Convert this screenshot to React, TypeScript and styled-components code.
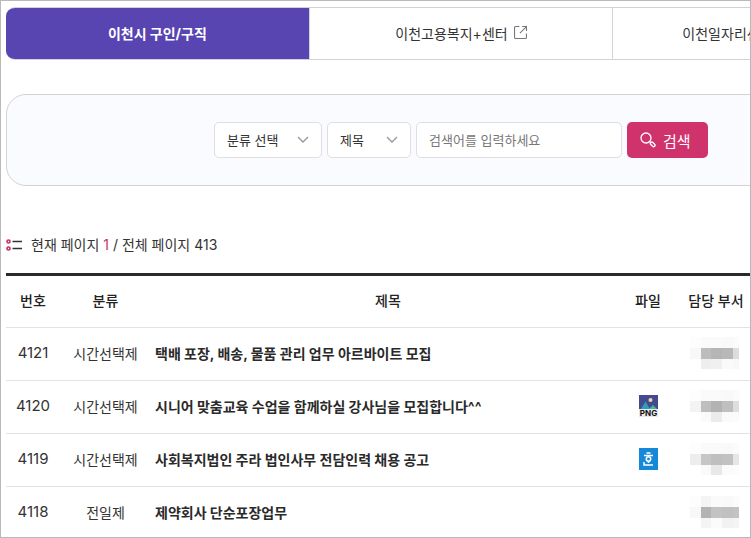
import React from 'react';
import styled, { createGlobalStyle, css } from 'styled-components';

const GlobalStyle = createGlobalStyle`
  *, *::before, *::after { box-sizing: border-box; }
  body { margin: 0; background: #fff; }
  body, button, input, select {
    font-family: Inter, 'Noto Sans CJK KR', sans-serif;
    font-size: 14px;
    color: #333;
  }
`;

const Frame = styled.div`
  height: 100vh;
  overflow: hidden;
  border: 1px solid #b9b9b9;
  padding: 6px 0 0 5px;
`;

const Content = styled.main`
  min-width: 910px;
`;

const Tabs = styled.nav`
  display: flex;
  height: 53px;
  border: solid #d3d3d6;
  border-width: 1px 0;
  border-radius: 9px;
  overflow: hidden;
`;

const Tab = styled.a<{ $active?: boolean }>`
  flex: 1;
  display: flex;
  align-items: center;
  justify-content: center;
  gap: 6px;
  padding-bottom: 2px;
  color: #333;
  text-decoration: none;
  & + & { border-left: 1px solid #d3d3d6; }
  ${p => p.$active && css`
    background: #5845b1;
    color: #fff;
    font-weight: 700;
  `}
`;

const SearchPanel = styled.form`
  display: flex;
  align-items: center;
  justify-content: center;
  gap: 5px;
  height: 92px;
  margin-top: 34px;
  background: #fafbfe;
  border: 1px solid #d3d3d6;
  border-radius: 20px;
`;

const SelectWrap = styled.div<{ $width: number }>`
  display: grid;
  align-items: center;
  width: ${p => p.$width}px;
  > * { grid-area: 1 / 1; }
  > svg { justify-self: end; margin-right: 13px; pointer-events: none; }
`;

const field = css`
  height: 36px;
  padding: 0 12px;
  font-size: 13px;
  background: #fff;
  border: 1px solid #dedee3;
  border-radius: 5px;
`;

const Select = styled.select`
  ${field}
  width: 100%;
  appearance: none;
`;

const SearchInput = styled.input`
  ${field}
  width: 206px;
  &::placeholder { color: #777; opacity: 1; }
`;

const SearchButton = styled.button`
  display: flex;
  align-items: center;
  gap: 7px;
  width: 81px;
  height: 36px;
  padding: 0 13px;
  border: 0;
  border-radius: 5px;
  background: #d0326b;
  color: #fff;
  font-size: 15px;
  white-space: nowrap;
`;

const Summary = styled.p`
  display: flex;
  align-items: center;
  gap: 9px;
  margin: 48px 0 17px;
  line-height: 22px;
  strong { color: #c5336b; font-weight: 400; }
`;

const Table = styled.table`
  width: 100%;
  table-layout: fixed;
  border-collapse: collapse;
  border-top: 3px solid #2a2a2d;
`;

const Col = styled.col<{ $width?: number }>`
  width: ${p => (p.$width ? `${p.$width}px` : 'auto')};
`;

const Row = styled.tr`
  height: 53px;
  border-bottom: 1px solid #e2e2e4;
`;

const Th = styled.th`
  padding: 0 0 3px;
  font-weight: 500;
  color: #222;
`;

const Td = styled.td`
  padding: 0 0 3px;
  text-align: center;
  svg { display: block; margin: 0 auto; }
`;

const NumberCell = styled(Td)`
  font-size: 15px;
`;

const TitleCell = styled(Td)`
  padding-left: 4px;
  text-align: left;
`;

const TitleLink = styled.a`
  color: #2a2a2a;
  font-weight: 700;
  text-decoration: none;
`;

const ExternalIcon = () => (
  <svg width="13" height="13" viewBox="0 0 12 12" fill="none" stroke="#777" aria-hidden="true">
    <path d="M5 .5H1.5a1 1 0 0 0-1 1v9a1 1 0 0 0 1 1h9a1 1 0 0 0 1-1V7M7.5.5h4v4M11.5.5 5.5 6.5" />
  </svg>
);

const Chevron = () => (
  <svg width="12" height="8" viewBox="0 0 12 8" fill="none" stroke="#999" strokeWidth="1.4" aria-hidden="true">
    <path d="m1 1 5 5 5-5" />
  </svg>
);

const SearchIcon = () => (
  <svg width="16" height="16" viewBox="0 0 16 16" fill="none" stroke="#fff" strokeWidth="1.3" aria-hidden="true">
    <circle cx="6" cy="6" r="5" />
    <path d="m9.7 9.7 1 1" />
    <rect x="10" y="11" width="5.4" height="2.8" rx="1.4" transform="rotate(45 12.7 12.4)" />
  </svg>
);

const ListIcon = () => (
  <svg width="16" height="12" viewBox="0 0 16 12" fill="none" aria-hidden="true">
    <g stroke="#c5336b" strokeWidth="1.7">
      <circle cx="2.5" cy="2.5" r="1.5" />
      <circle cx="2.5" cy="9.5" r="1.5" />
    </g>
    <path d="M6.5 2.5H16M6.5 9.5H16" stroke="#333" strokeWidth="1.7" />
  </svg>
);

const PngIcon = () => (
  <svg width="19" height="22" viewBox="0 0 19 22" role="img" aria-label="PNG">
    <path fill="#434a8f" d="M0 0h19v14H0z" />
    <circle cx="11.5" cy="5" r="2" fill="#f5d79a" />
    <path fill="#2ba0b5" d="m2 14 4.500-7.500L11 14z" />
    <path fill="#45b89b" d="m10 14 4-4 4 4z" />
    <path fill="#e9e9ea" d="M0 14h19v8H0z" />
    <text x="9.500" y="21" textAnchor="middle" fontFamily="Inter, sans-serif" fontSize="8" fontWeight="700" fill="#111">PNG</text>
  </svg>
);

const HwpIcon = () => (
  <svg width="19" height="22" viewBox="0 0 19 22" role="img" aria-label="HWP">
    <path fill="#1688d8" d="M0 0h19v22H0z" />
    <g fill="none" stroke="#fff" strokeWidth="1.5">
      <path d="M7.500 5h4M5 7.500h9M9.500 13.500V15M5 14v3h9" />
      <circle cx="9.500" cy="11" r="2.200" />
    </g>
  </svg>
);

const cellEdges = [0, 11, 21, 32, 43, 49];

const Mosaic = ({ shades }: { shades: string[][] }) => (
  <svg width="53" height="32" viewBox="0 0 53 32" shapeRendering="crispEdges" aria-hidden="true">
    {shades.map((line, y) => line.map((c, x) => (
      <rect key={`${x}-${y}`} x={cellEdges[x]} y={y * 11} width={cellEdges[x + 1] - cellEdges[x]} height="11" fill={c} />
    )))}
  </svg>
);

const faint = ['#fdfdfd', '#fafafa', '#fafafa', '#f9f9f9', '#fbfbfb'];

const posts = [
  {
    no: 4121, type: '시간선택제', title: '택배 포장, 배송, 물품 관리 업무 아르바이트 모집',
    shades: [faint, ['#f8f8f8', '#bdbdbd', '#b5b5b5', '#b8b8b8', '#dcdcdc'], ['#fff', '#eee', '#f0f0f0', '#fafafa', '#f8f8f8']],
  },
  {
    no: 4120, type: '시간선택제', title: '시니어 맞춤교육 수업을 함께하실 강사님을 모집합니다^^', file: <PngIcon />,
    shades: [faint, ['#f3f3f3', '#bebebe', '#b2b2b2', '#bfbfbf', '#dedede'], ['#fff', '#fafafa', '#ebebeb', '#fafafa', '#fbfbfb']],
  },
  {
    no: 4119, type: '시간선택제', title: '사회복지법인 주라 법인사무 전담인력 채용 공고', file: <HwpIcon />,
    shades: [faint, ['#ededed', '#c6c6c6', '#bfbfbf', '#c2c2c2', '#e6e6e6'], ['#fff', '#fafafa', '#e8e8e8', '#fbfbfb', '#fcfcfc']],
  },
  {
    no: 4118, type: '전일제', title: '제약회사 단순포장업무',
    shades: [['#fdfdfd', '#f4f4f4', '#fafafa', '#f9f9f9', '#fbfbfb'], ['#f8f8f8', '#b3b3b3', '#c3c3c3', '#c0c0c0', '#c3c3c3'], ['#fff', '#f4f4f4', '#fbfbfb', '#f2f2f2', '#f4f4f4']],
  },
];

export default function App() {
  return (
    <Frame>
      <GlobalStyle />
      <Content>
        <Tabs>
          <Tab href="#jobs" $active>이천시 구인/구직</Tab>
          <Tab href="#center">이천고용복지+센터 <ExternalIcon /></Tab>
          <Tab href="#work">이천일자리센터 홈페이지 <ExternalIcon /></Tab>
        </Tabs>
        <SearchPanel>
          <SelectWrap $width={108}>
            <Select aria-label="분류"><option>분류 선택</option></Select>
            <Chevron />
          </SelectWrap>
          <SelectWrap $width={84}>
            <Select aria-label="검색 조건"><option>제목</option></Select>
            <Chevron />
          </SelectWrap>
          <SearchInput aria-label="검색어" placeholder="검색어를 입력하세요" />
          <SearchButton type="button"><SearchIcon />검색</SearchButton>
        </SearchPanel>
        <Summary>
          <ListIcon />
          <span>현재 페이지 <strong>1</strong> / 전체 페이지 413</span>
        </Summary>
        <Table>
          <colgroup>
            <Col $width={54} /><Col $width={91} /><Col /><Col $width={46} /><Col $width={90} /><Col $width={155} />
          </colgroup>
          <thead>
            <Row><Th>번호</Th><Th>분류</Th><Th>제목</Th><Th>파일</Th><Th>담당 부서</Th></Row>
          </thead>
          <tbody>
            {posts.map(p => (
              <Row key={p.no}>
                <NumberCell>{p.no}</NumberCell>
                <Td>{p.type}</Td>
                <TitleCell><TitleLink href={`#${p.no}`}>{p.title}</TitleLink></TitleCell>
                <Td>{p.file}</Td>
                <Td><Mosaic shades={p.shades} /></Td>
              </Row>
            ))}
          </tbody>
        </Table>
      </Content>
    </Frame>
  );
}
